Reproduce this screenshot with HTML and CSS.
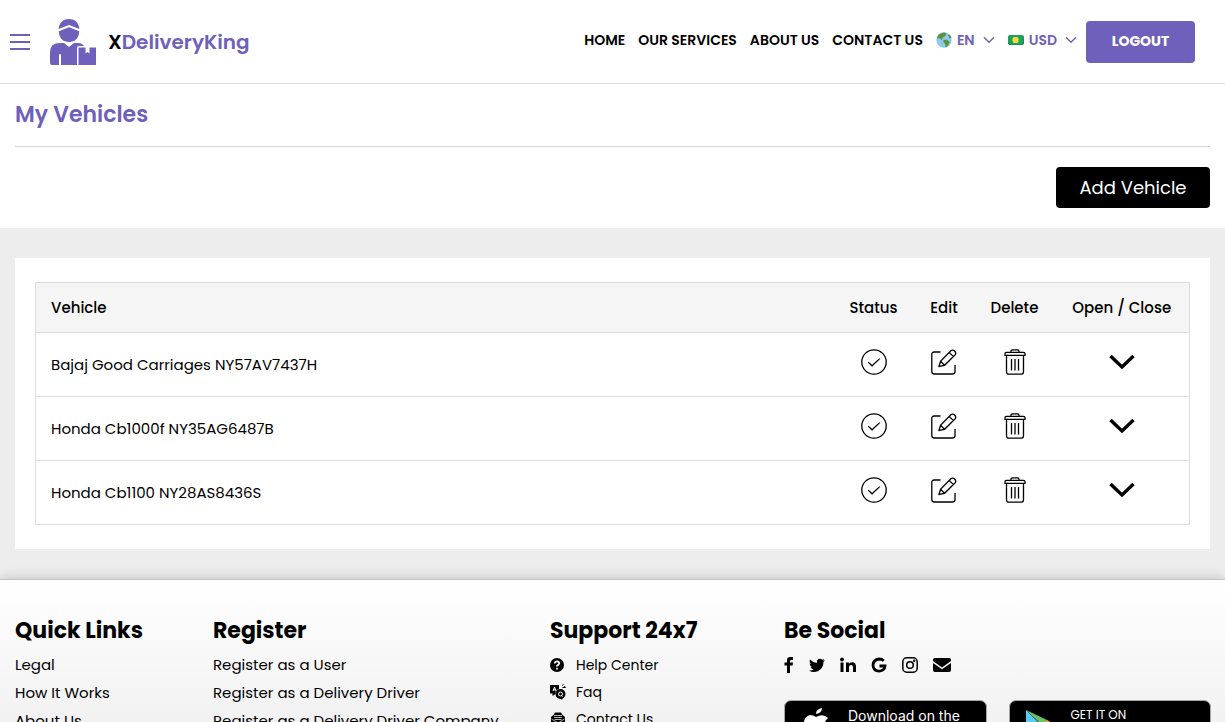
FILE: index.html
```html
<!DOCTYPE html>
<html lang="en">
<head>
    <meta charset="UTF-8">
    <title>My Vehicles | XDeliveryKing</title>
    <meta name="viewport" content="width=device-width, initial-scale=1.0">
    <link rel="stylesheet" href="styles.css">
</head>
<body>

<!-- shared icons -->
<svg class="sprite" aria-hidden="true">
    <symbol id="check" viewBox="0 0 26 26">
        <circle cx="13" cy="13" r="12.2"/>
        <path d="M7.3 13.2l3.8 3.6 7.6-7.2"/>
    </symbol>
    <symbol id="edit" viewBox="0 0 26 26">
        <path d="M9.500 3H3.200Q.8 3 .8 5.400V22.500Q.8 25 3.200 25H21.500Q24 25 24 22.500V16"/>
        <path d="M8 17.500l1.500-5.200L19.800 1.800q1.700-1.500 3.800.2 2 2 .4 4L13.500 16.300zM9.500 12.300l4 4M18.200 3.400l4.200 4.200"/>
    </symbol>
    <symbol id="trash" viewBox="0 0 26 26">
        <path d="M9 3.200V2.300Q9 .8 10.500.8h5Q17 .8 17 2.300v.9M4.500 3.300h17q1.500 0 1.500 1.500v1.500H3V4.800q0-1.500 1.500-1.500zM4.500 6.500v16.200q0 2.500 2.500 2.500h12q2.500 0 2.500-2.500V6.500M9.500 10v11.500M13 10v11.500M16.500 10v11.500"/>
    </symbol>
    <symbol id="arrow" viewBox="0 0 26 16">
        <path d="M1.500 2L13 13 24.500 2"/>
    </symbol>
    <symbol id="caret" viewBox="0 0 12 8">
        <path d="M1 1.200l5 5 5-5"/>
    </symbol>
</svg>

<header class="header">
    <button class="menu" aria-label="Menu"><span></span><span></span><span></span></button>
    <a class="brand" href="#">
        <svg class="logo" viewBox="0 0 46 46" aria-hidden="true">
            <path d="M8.500 10C9.500 3 13.500 0 19 0s9.500 3 10.500 10L19 6z"/>
            <path d="M8.800 12.200L19 8.300l10.200 3.900C29 19 25 23 19 23S9 19 8.800 12.200z"/>
            <path d="M0 44V33q0-9 10-9h4l5 4 5-4h4q4 0 6 3h-5q-2 0-2 2v17H11V36q0-1-1-1t-1 1v10H2q-2 0-2-2z"/>
            <path d="M28.500 28.500h7v6l2-1.500 2 1.500v-6H46V46H28.500z"/>
        </svg>
        <span class="name"><b>X</b>DeliveryKing</span>
    </a>
    <nav class="nav">
        <a href="#">HOME</a>
        <a href="#">OUR SERVICES</a>
        <a href="#">ABOUT US</a>
        <a href="#">CONTACT US</a>
        <button class="pick">
            <svg class="globe" viewBox="0 0 16 16" aria-hidden="true">
                <circle cx="8" cy="8" r="7.700" fill="#8fc9f0"/>
                <path d="M2 3.500Q4 .8 8 .5l2.500 1-1 2.500-2 1-1.500 2-2-.7L1 6.500zM7.500 8l3-.5L14 10l-3 4.800-1.500.4-.3-3.200-2-2zM12 3l2-.3 1.300 3-1.800.8zM4 6.500l2.500 1-.5 1z" fill="#5c913b"/>
            </svg>
            EN
            <svg class="caret" aria-hidden="true"><use href="#caret"/></svg>
        </button>
        <button class="pick">
            <svg class="cash" viewBox="0 0 16 10" aria-hidden="true">
                <rect width="16" height="10" rx="2" fill="#1fa35a"/>
                <path d="M0 8l2 2h12l2-3V2" fill="none" stroke="#13834a"/>
                <rect x="4.500" y="2" width="6" height="6" rx="2" fill="#ffd93b"/>
            </svg>
            USD
            <svg class="caret" aria-hidden="true"><use href="#caret"/></svg>
        </button>
    </nav>
    <button class="logout">LOGOUT</button>
</header>

<section class="title">
    <h1>My Vehicles</h1>
    <div class="actions"><button class="add">Add Vehicle</button></div>
</section>

<main class="main">
    <div class="card">
        <table class="vehicles">
            <thead>
                <tr><th>Vehicle</th><th class="c80">Status</th><th class="c60">Edit</th><th class="c80">Delete</th><th class="c135">Open / Close</th></tr>
            </thead>
            <tbody>
                <tr>
                    <td>Bajaj Good Carriages NY57AV7437H</td>
                    <td><button class="ico" aria-label="Status"><svg><use href="#check"/></svg></button></td>
                    <td><button class="ico" aria-label="Edit"><svg><use href="#edit"/></svg></button></td>
                    <td><button class="ico" aria-label="Delete"><svg><use href="#trash"/></svg></button></td>
                    <td><button class="ico open" aria-label="Open"><svg><use href="#arrow"/></svg></button></td>
                </tr>
                <tr>
                    <td>Honda Cb1000f NY35AG6487B</td>
                    <td><button class="ico" aria-label="Status"><svg><use href="#check"/></svg></button></td>
                    <td><button class="ico" aria-label="Edit"><svg><use href="#edit"/></svg></button></td>
                    <td><button class="ico" aria-label="Delete"><svg><use href="#trash"/></svg></button></td>
                    <td><button class="ico open" aria-label="Open"><svg><use href="#arrow"/></svg></button></td>
                </tr>
                <tr>
                    <td>Honda Cb1100 NY28AS8436S</td>
                    <td><button class="ico" aria-label="Status"><svg><use href="#check"/></svg></button></td>
                    <td><button class="ico" aria-label="Edit"><svg><use href="#edit"/></svg></button></td>
                    <td><button class="ico" aria-label="Delete"><svg><use href="#trash"/></svg></button></td>
                    <td><button class="ico open" aria-label="Open"><svg><use href="#arrow"/></svg></button></td>
                </tr>
            </tbody>
        </table>
    </div>
</main>

<footer class="footer">
    <div>
        <h2>Quick Links</h2>
        <ul>
            <li><a href="#">Legal</a></li>
            <li><a href="#">How It Works</a></li>
            <li><a href="#">About Us</a></li>
        </ul>
    </div>
    <div>
        <h2>Register</h2>
        <ul>
            <li><a href="#">Register as a User</a></li>
            <li><a href="#">Register as a Delivery Driver</a></li>
            <li><a href="#">Register as a Delivery Driver Company</a></li>
        </ul>
    </div>
    <div>
        <h2>Support 24x7</h2>
        <ul class="support">
            <li><a href="#">
                <svg viewBox="0 0 16 16" aria-hidden="true"><circle cx="7" cy="8" r="7"/><path d="M4.800 6.500Q4.900 4.300 7 4.300t2.200 1.900Q9.200 7.500 7 8.800v.7M7 10.800v1.700" fill="none" stroke="#fff" stroke-width="1.700"/></svg>
                Help Center</a></li>
            <li><a href="#">
                <svg viewBox="0 0 16 16" aria-hidden="true"><path d="M0 1h9v4Q5 6 5.500 10L2.500 12v-2.500H0z"/><path d="M3 7l1.500-4L6 7M3.500 5.800h2" fill="none" stroke="#fff"/><circle cx="10.500" cy="10" r="5"/><path d="M10 14l2 2 .5-2z"/><circle cx="10.500" cy="10" r="2" fill="none" stroke="#fff"/><path d="M11 11l1.500 1.500" stroke="#fff"/><path d="M12 1.500l1.500-1M12.500 3.500h3l-1.200-1.500" fill="none" stroke="#000"/></svg>
                Faq</a></li>
            <li><a href="#">
                <svg viewBox="0 0 16 16" aria-hidden="true"><path d="M1 6l3-2.500L5 1.500h6l1 2L15 6v9H1z"/><path d="M4 4.500h8M4 6.500h8M4.500 8.500h7M1.500 8L8 12l6.500-4M2 14l4-3M14 14l-4-3" fill="none" stroke="#ddd" stroke-width=".8"/></svg>
                Contact Us</a></li>
        </ul>
    </div>
    <div>
        <h2>Be Social</h2>
        <div class="social">
            <a href="#" aria-label="Facebook"><svg width="10" height="18" viewBox="0 0 10 18"><path d="M3 17V9.500H.5v-3H3V4.300Q3 1 6.300 1H9v3H7.200Q6 4 6 5.100v1.400h3l-.4 3H6V17z"/></svg></a>
            <a href="#" aria-label="Twitter"><svg width="16" height="18" viewBox="0 0 16 18"><path d="M16 4.300l-1.600 1.600C14.500 12 10.500 16 5 16q-3 0-5-1.500 2.800.2 4.700-1.300-2.300-.2-3-2.300h1.400Q.7 10 .6 7.400l1.400.4Q-.3 5.900 1.100 3.400q2.700 3.200 6.800 3.500Q7.400 3 10.800 2.700q1.600 0 2.500 1L15.300 3l-1.200 1.700z"/></svg></a>
            <a href="#" aria-label="LinkedIn"><svg width="16" height="18" viewBox="0 0 16 18"><circle cx="2" cy="3.500" r="1.900"/><path d="M.5 6.500h3V16h-3zM6 6.500h2.900v1.300Q9.800 6.300 12 6.300q4 0 4 4.400V16h-3v-4.700Q13 9 11.200 9 9 9 9 11.300V16H6z"/></svg></a>
            <a href="#" aria-label="Google"><svg width="16" height="18" viewBox="0 0 16 18"><path d="M12.800 4.700Q11 3 8.300 3 2.200 3.500 2 9.200q.3 5.600 6.300 6Q13.600 14.700 14 10H8.500" fill="none" stroke="#000" stroke-width="2.800"/></svg></a>
            <a href="#" aria-label="Instagram"><svg width="16" height="18" viewBox="0 0 16 18" fill="none" stroke="#000" stroke-width="1.500"><rect x=".8" y="1.800" width="14.400" height="14.400" rx="4"/><circle cx="8" cy="9" r="3.300"/><circle cx="12.200" cy="4.800" r=".5"/></svg></a>
            <a href="#" aria-label="Email"><svg width="18" height="18" viewBox="0 0 18 18"><path d="M0 4q0-2 2-2h14q2 0 2 2v1l-9 6.500L0 5zM0 7l9 6.300L18 7v7q0 2-2 2H2q-2 0-2-2z"/></svg></a>
        </div>
        <div class="stores">
            <a class="store" href="#">
                <svg width="30" height="34" viewBox="0 0 30 34" aria-hidden="true"><path d="M15 6q0-5 6-6 0 5-6 6zM15 9q7-4 12 1-7 6 1 12-4 10-9 9-4-2-8 0-5 0-8-10Q1 9 9 7q3 0 6 2z" fill="#fff"/></svg>
                <span class="apple">Download on the</span>
            </a>
            <a class="store" href="#">
                <svg width="30" height="34" viewBox="0 0 30 34" aria-hidden="true"><path d="M0 2v30l15-15z" fill="#5bc9f4"/><path d="M0 2l21 10-5 5z" fill="#6cc067"/><path d="M0 32l21-10-5-5z" fill="#ee4b50"/><path d="M21 12l8 5-8 5-5-5z" fill="#fbc51d"/></svg>
                <span class="play">GET IT ON</span>
            </a>
        </div>
    </div>
</footer>

</body>
</html>
```
FILE: styles.css
```css
* { box-sizing: border-box; }
body { margin: 0; height: 100vh; overflow: hidden; background: #fff; color: #000; font-family: Poppins, Inter, sans-serif; font-size: 15px; line-height: 24px; }
a { color: inherit; text-decoration: none; }
button { font-family: inherit; border: none; background: none; padding: 0; cursor: pointer; }
h1, h2, ul { margin: 0; padding: 0; }
ul { list-style: none; }
svg { display: block; }
.sprite { display: none; }

.header { display: flex; align-items: center; height: 84px; padding: 0 30px 0 10px; border-bottom: 1px solid #d9d9d9; }
.menu { display: flex; flex-direction: column; gap: 5px; width: 20px; }
.menu span { height: 2px; background: #6f60bb; }
.brand { display: flex; align-items: center; gap: 12px; margin-left: 20px; }
.logo { width: 46px; height: 46px; fill: #6f60bb; }
.name { font-size: 20px; font-weight: 600; color: #6f60bb; }
.name b { font-weight: 600; color: #000; }
.nav { display: flex; align-items: center; gap: 13px; margin: 0 9px 3px auto; font-size: 14px; font-weight: 600; }
.pick { display: flex; align-items: center; gap: 5px; font-size: 14px; font-weight: 600; color: #6f60bb; }
.globe { width: 16px; height: 16px; }
.cash { width: 16px; height: 10px; }
.caret { width: 12px; height: 8px; margin-left: 3px; fill: none; stroke: #6f60bb; stroke-width: 1.4; }
.logout { width: 109px; height: 42px; border-radius: 4px; background: #6f60bb; color: #fff; font-size: 14px; font-weight: 700; }

.title { padding: 0 15px; }
.title h1 { height: 63px; padding-top: 15px; border-bottom: 1px solid #d5d5d5; font-size: 22px; line-height: 32px; font-weight: 600; color: #6f60bb; }
.actions { display: flex; justify-content: flex-end; padding: 20px 0; }
.add { width: 154px; height: 41px; border-radius: 4px; background: #000; color: #fff; font-size: 18px; }

.main { padding: 30px 15px; background: #ededed; }
.card { padding: 24px 20px; background: #fff; }
.vehicles { width: 100%; border: 1px solid #dcdcdc; border-collapse: collapse; table-layout: fixed; }
.vehicles th { height: 50px; padding: 0; background: #f5f5f5; font-size: 15px; font-weight: 500; }
.vehicles td { height: 64px; padding: 0; border-top: 1px solid #dcdcdc; }
.vehicles th:first-child, .vehicles td:first-child { padding-left: 15px; text-align: left; }
.c60 { width: 61px; }
.c80 { width: 80px; }
.c135 { width: 135px; }
.ico { display: block; margin: 0 auto 6px; }
.ico svg { width: 26px; height: 26px; fill: none; stroke: #000; stroke-width: 1.3; }
.ico.open svg { height: 16px; stroke-width: 3.4; }

.footer { position: relative; display: grid; grid-template-columns: 198px 337px 234px 1fr; padding: 35px 14px 40px 15px; border-top: 1px solid #c4c4c4; background: linear-gradient(#fff, #ececec 200px); box-shadow: 0 0 12px rgba(0, 0, 0, .2); }
.footer h2 { margin-bottom: 6px; font-size: 22px; line-height: 32px; font-weight: 700; }
.footer li { height: 28px; font-size: 15px; white-space: nowrap; }
.footer .support li { height: 27px; font-size: 14px; }
.support a { display: flex; align-items: center; gap: 10px; }
.support svg { width: 16px; height: 16px; }
.social { display: flex; gap: 15px; padding-top: 3px; }
.stores { display: flex; gap: 22px; margin-top: 26px; }
.store { display: flex; flex: 1; height: 60px; padding: 7px 16px; border: 1px solid #a6a6a6; border-radius: 7px; background: #000; color: #fff; }
.store svg { flex: none; }
.apple { margin-left: 17px; font-family: Inter, sans-serif; font-size: 14px; line-height: 16px; white-space: nowrap; }
.play { margin-left: 15px; font-size: 12px; line-height: 14px; white-space: nowrap; }
```
